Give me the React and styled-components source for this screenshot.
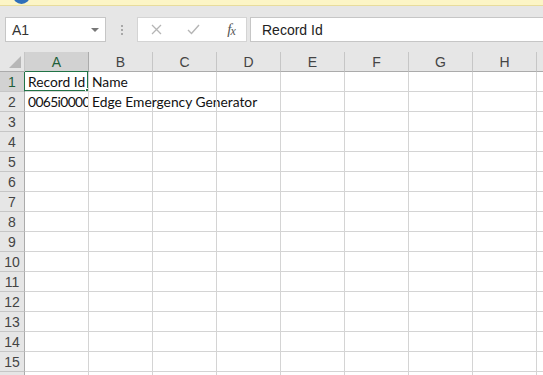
import React from "react";
import styled, { createGlobalStyle } from "styled-components";

const Global = createGlobalStyle`
  html, body { margin: 0; padding: 0; background: #fff; overflow: hidden; }
  body { font-family: "Liberation Sans", Arial, sans-serif; }
`;

const Page = styled.div`
  width: 543px;
  height: 375px;
  overflow: hidden;
  display: flex;
  flex-direction: column;
`;

const MessageBar = styled.div`
  position: relative;
  height: 5px;
  background: #fcf5c6;
  border-bottom: 1px solid #e8dc9c;
  flex: none;
`;

const InfoDot = styled.div`
  position: absolute;
  left: 13px;
  top: -13px;
  width: 17px;
  height: 17px;
  border-radius: 50%;
  background: #2f6fba;
`;

const Toolbar = styled.div`
  height: 46px;
  flex: none;
  background: #e6e6e6;
  display: flex;
  align-items: flex-start;
  padding: 11px 0 0 5px;
  box-sizing: border-box;
`;

const NameBox = styled.div`
  width: 101px;
  height: 25px;
  box-sizing: border-box;
  background: #fff;
  border: 1px solid #c6c6c6;
  display: flex;
  align-items: center;
  justify-content: space-between;
  padding: 0 6px 0 6px;
  font-size: 14px;
  color: #333;
`;

const Caret = styled.span`
  width: 0;
  height: 0;
  border-left: 4px solid transparent;
  border-right: 4px solid transparent;
  border-top: 4px solid #777;
`;

const Grip = styled.div`
  width: 31px;
  height: 25px;
  display: flex;
  flex-direction: column;
  align-items: center;
  justify-content: center;
  gap: 2px;
  span {
    width: 2px;
    height: 2px;
    background: #a8a8a8;
  }
`;

const FxBox = styled.div`
  width: 110px;
  height: 25px;
  box-sizing: border-box;
  background: #fff;
  border: 1px solid #d4d4d4;
  display: flex;
  align-items: center;
  padding-left: 12px;
`;

const IconSlot = styled.div`
  width: ${(p) => p.$w}px;
  display: flex;
  align-items: center;
  justify-content: center;
`;

const Fx = styled.span`
  font-family: "Liberation Serif", serif;
  font-style: italic;
  font-size: 15px;
  color: #555;
  letter-spacing: -1px;
  line-height: 1;
  small {
    font-size: 12px;
    vertical-align: -1px;
  }
`;

const FormulaInput = styled.div`
  margin-left: 3px;
  flex: 1;
  height: 25px;
  box-sizing: border-box;
  background: #fff;
  border: 1px solid #c6c6c6;
  border-right: none;
  display: flex;
  align-items: center;
  padding-left: 11px;
  font-size: 14px;
  color: #222;
`;

const Sheet = styled.div`
  display: grid;
  grid-template-columns: 25px repeat(9, 64px);
  grid-auto-rows: 20px;
  flex: 1;
  font-family: "Lato", "Liberation Sans", sans-serif;
`;

const Corner = styled.div`
  position: relative;
  background: #e6e6e6;
  border-right: 1px solid #c6c6c6;
  border-bottom: 1px solid #ababab;
  box-sizing: border-box;
  &::after {
    content: "";
    position: absolute;
    right: 3px;
    bottom: 3px;
    width: 0;
    height: 0;
    border-left: 12px solid transparent;
    border-bottom: 12px solid #b7b7b7;
  }
`;

const ColHead = styled.div`
  background: ${(p) => (p.$sel ? "#d2d2d2" : "#e6e6e6")};
  border-right: 1px solid ${(p) => (p.$sel ? "#ababab" : "#c6c6c6")};
  border-bottom: 1px solid ${(p) => (p.$sel ? "#217346" : "#ababab")};
  box-sizing: border-box;
  display: flex;
  align-items: center;
  justify-content: center;
  font-family: "Liberation Sans", Arial, sans-serif;
  font-size: 14px;
  color: ${(p) => (p.$sel ? "#1f5f3a" : "#444")};
`;

const RowHead = styled.div`
  background: ${(p) => (p.$sel ? "#d2d2d2" : "#e6e6e6")};
  border-right: 1px solid ${(p) => (p.$sel ? "#217346" : "#ababab")};
  border-bottom: 1px solid #c6c6c6;
  box-sizing: border-box;
  display: flex;
  align-items: center;
  justify-content: center;
  font-family: "Liberation Sans", Arial, sans-serif;
  font-size: 14px;
  color: ${(p) => (p.$sel ? "#1f5f3a" : "#444")};
`;

const Cell = styled.div`
  position: relative;
  border-right: 1px solid #d4d4d4;
  border-bottom: 1px solid #d4d4d4;
  box-sizing: border-box;
  font-size: 13.8px;
  letter-spacing: ${(p) => (p.$tight ? "-0.6px" : "0")};
  color: #111;
  line-height: 19px;
  padding-left: 3px;
  white-space: nowrap;
  overflow: ${(p) => (p.$clip ? "hidden" : "visible")};
  z-index: ${(p) => (p.$top ? 2 : 1)};
`;

const Selection = styled.div`
  position: absolute;
  left: -2px;
  top: -2px;
  right: -1px;
  bottom: -1px;
  border: 2px solid #217346;
  pointer-events: none;
  z-index: 3;
  &::after {
    content: "";
    position: absolute;
    right: -5px;
    bottom: -5px;
    width: 5px;
    height: 5px;
    background: #217346;
    border: 1px solid #fff;
  }
`;

const cols = ["A", "B", "C", "D", "E", "F", "G", "H", "I"];
const data = {
  "1-0": "Record Id",
  "1-1": "Name",
  "2-0": "0065i0000",
  "2-1": "Edge Emergency Generator",
};

export default function App() {
  const rows = [];
  for (let r = 1; r <= 16; r++) {
    rows.push(
      <RowHead key={`h${r}`} $sel={r === 1}>
        {r}
      </RowHead>
    );
    cols.forEach((c, i) => {
      const val = data[`${r}-${i}`];
      const clip = val && data[`${r}-${i + 1}`] !== undefined;
      rows.push(
        <Cell
          key={`${r}-${i}`}
          $clip={clip}
          $tight={val && /^\d/.test(val)}
          $top={r === 1 && i === 0}
        >
          {val}
          {r === 1 && i === 0 && <Selection />}
        </Cell>
      );
    });
  }
  return (
    <Page>
      <Global />
      <MessageBar>
        <InfoDot />
      </MessageBar>
      <Toolbar>
        <NameBox>
          A1
          <Caret />
        </NameBox>
        <Grip>
          <span />
          <span />
          <span />
        </Grip>
        <FxBox>
          <IconSlot $w={12}>
            <svg width="11" height="11" viewBox="0 0 11 11">
              <path d="M1 1L10 10M10 1L1 10" stroke="#b5b5b5" strokeWidth="1.3" fill="none" />
            </svg>
          </IconSlot>
          <IconSlot $w={62}>
            <svg width="13" height="11" viewBox="0 0 13 11">
              <path d="M1 6L4.5 9.5L12 1" stroke="#b5b5b5" strokeWidth="1.4" fill="none" />
            </svg>
          </IconSlot>
          <IconSlot $w={14}>
            <Fx>
              f<small>x</small>
            </Fx>
          </IconSlot>
        </FxBox>
        <FormulaInput>Record Id</FormulaInput>
      </Toolbar>
      <Sheet>
        <Corner />
        {cols.map((c, i) => (
          <ColHead key={c} $sel={i === 0}>
            {c}
          </ColHead>
        ))}
        {rows}
      </Sheet>
    </Page>
  );
}
